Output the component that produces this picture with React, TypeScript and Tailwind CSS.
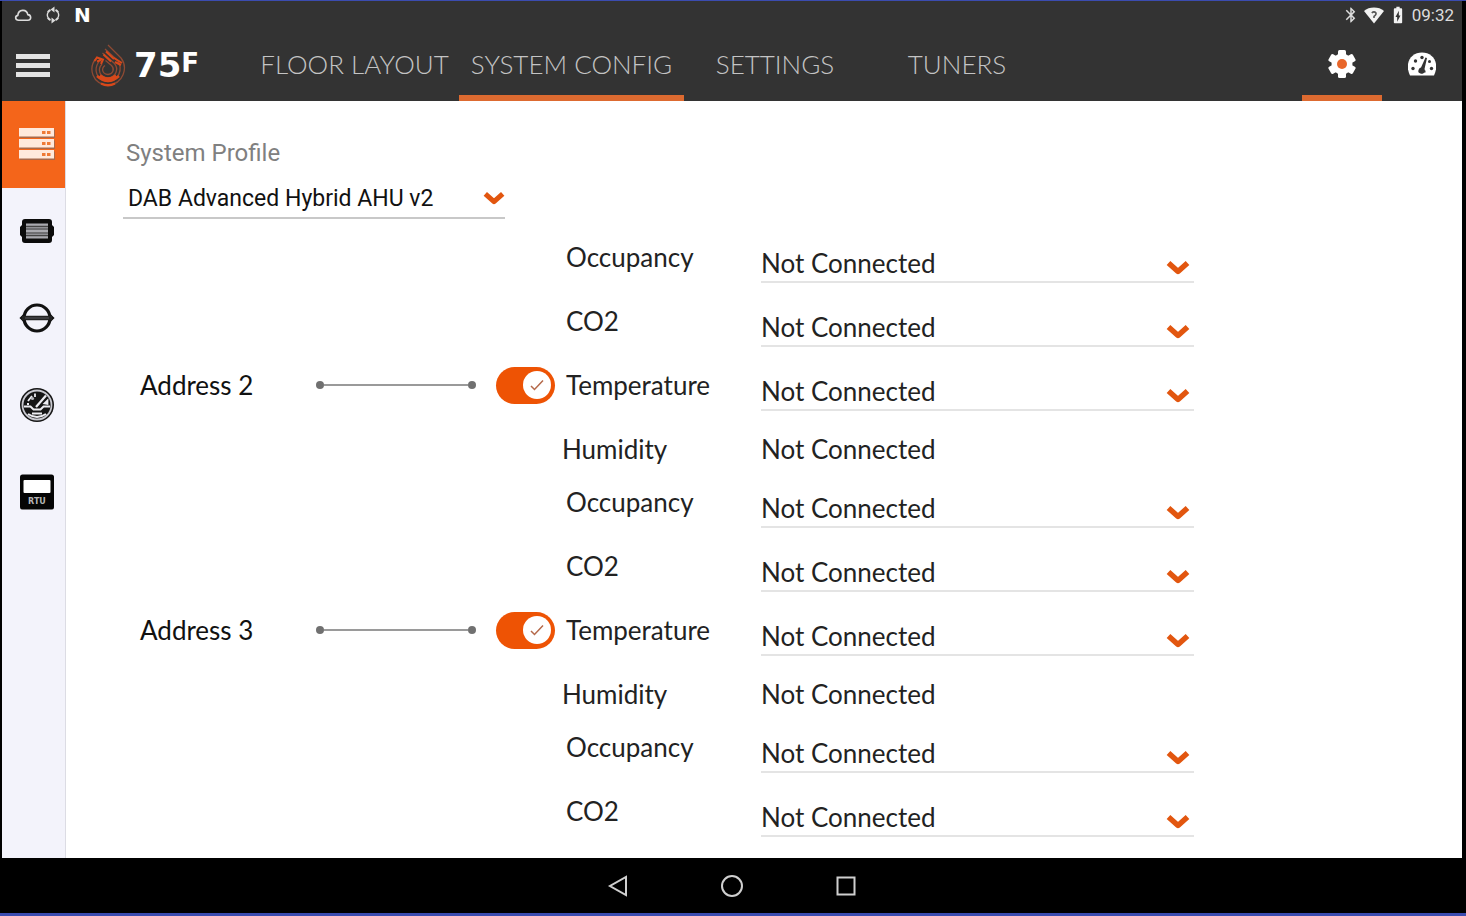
import type { ReactNode } from 'react';
import { MdBluetooth, MdBatteryChargingFull } from 'react-icons/md';

const Chevron = ({ className }: { className?: string }) => (
  <svg viewBox="0 0 24 16" className={className} fill="none" stroke="#e2560f" strokeWidth="5.5">
    <path d="M2.5 3 L12 11.5 L21.5 3" strokeLinejoin="round" />
  </svg>
);

const StatusBar = () => (
  <div className="flex h-7 items-center justify-between pl-3 pr-2 text-[#dcdcdc]">
    <div className="flex items-center gap-3">
      <svg viewBox="0 0 18 14" className="h-[14px] w-[18px]" fill="none" stroke="currentColor" strokeWidth="1.6">
        <path d="M4.5 12.2 C1.2 12.2 .6 8.2 3.8 7.4 C4.4 1 12.6 .6 13.8 6.6 C17.6 7 17.6 12.2 14 12.2 Z" />
      </svg>
      <svg viewBox="0 0 18 18" className="h-[18px] w-[18px]" fill="none" stroke="currentColor" strokeWidth="2">
        <path d="M6.5 3.8 A6 6 0 0 0 3.8 6.5 M11.5 3.8 A6 6 0 0 1 14.2 6.5 M6.5 14.2 A6 6 0 0 1 3.8 11.5 M11.5 14.2 A6 6 0 0 0 14.2 11.5" />
        <path d="M3.8 6.5 Q2.8 9 3.8 11.5 M14.2 6.5 Q15.2 9 14.2 11.5" strokeWidth="1.4" />
        <path d="M10.5 .5 L6.5 3.5 L10.5 6.5 Z M7.500 11.5 L11.5 14.5 L7.5 17.5 Z" fill="currentColor" stroke="none" />
      </svg>
      <span className="font-['DejaVu_Sans'] text-xl leading-none font-bold text-white">N</span>
    </div>
    <div className="flex items-center gap-1">
      <MdBluetooth className="h-[18px] w-[18px]" />
      <svg viewBox="0 0 20 17" className="h-[17px] w-5">
        <path d="M0 4 C5 -.6 15 -.6 20 4 L10 16.5 Z" fill="#f2f2f2" />
        <path d="M7.8 6 Q10 3.8 12 6 Q12.4 8 10 9.4 V11" fill="none" stroke="#555" strokeWidth="1.6" />
      </svg>
      <MdBatteryChargingFull className="h-5 w-5 text-[#f2f2f2]" />
      <span className="font-[Roboto] text-[17px] leading-none">09:32</span>
    </div>
  </div>
);

const Logo = () => (
  <a href="#home" className="ml-10 flex items-center gap-2" aria-label="75F home">
    <svg viewBox="0 0 36 44" className="h-11 w-9" fill="none" strokeLinecap="butt">
      <g stroke="#8f4a33" strokeWidth="1.3">
        <path d="M18 2 L31 15 C38 24 34 41 18 42 C2 41 -2 25 6 15.5" />
        <path d="M15 6 L28 18 C33 26 29 37.500 18 38.500 C6.500 37.500 3 27 9 18.500" />
        <path d="M12.500 10 L24.500 20.500 C29 26 26 34 18 35 C9.500 34 7 26.500 12 21" />
        <path d="M15.500 17.500 L21.500 22.500 C25 26 23 31 18 31.500 C12 31 11 25.500 15 22.500" />
      </g>
      <g stroke="#d8481a" strokeWidth="2">
        <path d="M16 8.500 L24 16 M13.500 11.500 L21 18.500 M24 15 L32 20 M25 19 L31 22" />
        <path d="M4.500 18 L7 14.500 L13 16.500 L11 21 M7 18.500 L11 17" />
        <path d="M7 33 Q18 43 29 33 M10 32.500 Q18 38.500 26 32.500 M11 40.500 Q18 44 25 40.500" strokeWidth="2.400" />
      </g>
    </svg>
    <span className="flex items-start font-['DejaVu_Sans'] text-[34px] leading-8 font-bold text-white">
      75<span className="text-[26px] leading-[28px]">F</span>
    </span>
  </a>
);

const tabs = [
  { label: 'FLOOR LAYOUT', width: 'w-[209px]' },
  { label: 'SYSTEM CONFIG', width: 'w-[225px]', active: true },
  { label: 'SETTINGS', width: 'w-[182px]' },
  { label: 'TUNERS', width: 'w-[182px]' },
];

const gearTeeth = [0, 60, 120, 180, 240, 300];

const Header = () => (
  <header className="bg-[#333333]">
    <StatusBar />
    <div className="flex h-[72px] items-stretch">
      <div className="flex w-[248px] items-center pl-[14px]">
        <button aria-label="Menu" className="flex w-[34px] flex-col gap-1">
          <span className="h-[5px] bg-[#e4e4e4]" />
          <span className="h-[5px] bg-[#e4e4e4]" />
          <span className="h-[5px] bg-[#e4e4e4]" />
        </button>
        <Logo />
      </div>
      <nav className="flex">
        {tabs.map((tab) => (
          <a
            key={tab.label}
            href={'#' + tab.label.toLowerCase().replace(' ', '-')}
            className={`flex items-center justify-center border-b-[6px] pt-1 font-[Lato] text-[26px] font-light whitespace-nowrap text-[#c4c4c4] ${tab.width} ${tab.active ? 'border-[#dd6a30]' : 'border-transparent'}`}
          >
            {tab.label}
          </a>
        ))}
      </nav>
      <div className="ml-auto flex">
        <button aria-label="Configuration" className="flex w-20 items-center justify-center border-b-[6px] border-[#dd6a30] pt-1">
          <svg viewBox="-14 -14 28 28" className="h-7 w-7" fill="#fff">
            {gearTeeth.map((angle) => (
              <rect key={angle} x="-4" y="-14" width="8" height="8" rx="1.5" transform={`rotate(${angle})`} />
            ))}
            <circle r="10.500" />
            <circle r="5" fill="#e8662a" />
          </svg>
        </button>
        <button aria-label="Dashboard" className="flex w-20 items-center justify-center border-b-[6px] border-transparent pt-1">
          <svg viewBox="0 0 28 24" className="h-6 w-7">
            <path d="M2 23.500 C-4 11 3 .5 14 .5 C25 .5 32 11 26 23.500 Z" fill="#fff" />
            <g fill="#333">
              <circle cx="5" cy="16.500" r="1.700" />
              <circle cx="7.500" cy="9" r="1.700" />
              <circle cx="14" cy="5.500" r="1.700" />
              <circle cx="23.500" cy="16.500" r="1.700" />
              <circle cx="21.500" cy="9.500" r="1.500" />
              <path d="M17.500 5.500 L19 6 L16.500 17 A3.200 3.200 0 1 1 13 15.500 Z" />
              <rect x="10.500" y="18.500" width="7" height="2" />
            </g>
          </svg>
        </button>
      </div>
    </div>
  </header>
);

const ServerIcon = () => (
  <svg viewBox="0 0 36 32" className="h-8 w-9">
    {[0, 11, 22].map((y) => (
      <g key={y}>
        <rect x="1" y={y + 1.5} width="35" height="8.500" fill="#a8694b" />
        <rect x="0" y={y} width="35" height="8.500" fill="#ffe9dc" />
        <path d={`M23 ${y + 4.5} h3.500 M28 ${y + 4.5} h3.500`} stroke="#ef7a35" strokeWidth="3" />
      </g>
    ))}
  </svg>
);

const VentIcon = () => (
  <svg viewBox="0 0 36 26" className="h-[26px] w-9">
    <path d="M6 1 H30 Q33 1 33 4 V7 L35 9 V17 L33 19 V22 Q33 25 30 25 H6 Q3 25 3 22 V19 L1 17 V9 L3 7 V4 Q3 1 6 1 Z" fill="#0b0b0b" />
    <rect x="7" y="5.500" width="22" height="15" fill="#a9a9af" />
    <path d="M7 8.500 H29 M7 17.500 H29" stroke="#444" strokeWidth="1.500" />
    <path d="M7 11 H29 M7 15 H29" stroke="#333" strokeWidth="1" />
  </svg>
);

const DamperIcon = () => (
  <svg viewBox="0 0 36 30" className="h-[30px] w-9" fill="none">
    <path d="M1.500 15 L5.500 11 V19 Z M34.500 15 L30.500 11 V19 Z" fill="#111" stroke="#111" strokeWidth="1.500" />
    <circle cx="18" cy="15" r="13" stroke="#111" strokeWidth="3.200" />
    <path d="M3 15 H33" stroke="#222" strokeWidth="4.500" />
    <path d="M6 15 H30" stroke="#55555a" strokeWidth="1" />
  </svg>
);

const GaugeIcon = () => (
  <svg viewBox="0 0 36 36" className="h-9 w-9" fill="none">
    <circle cx="18" cy="18" r="17" fill="#161616" />
    <circle cx="18" cy="18" r="14.500" stroke="#c9c9d0" strokeWidth="1.800" />
    <path d="M5 19.500 H11.500 L14.500 22.500 H21.500 L24.500 19.500 H31" stroke="#ededf2" strokeWidth="2" />
    <path d="M13 26.500 H23 M9 27 Q18 33 27 27" stroke="#ededf2" strokeWidth="2" />
    <path d="M17 20 L27 8.500" stroke="#ededf2" strokeWidth="2.200" />
    <path d="M9 14 L13 9 M8 17 H10 M16 6.500 V10 M25.500 16.500 L28.500 13.500 V17 Z" stroke="#ededf2" strokeWidth="1.800" />
    <circle cx="13.500" cy="11.500" r="1.600" fill="#b8b8be" />
  </svg>
);

const RtuIcon = () => (
  <svg viewBox="0 0 36 36" className="h-9 w-9">
    <rect x="1" y="0.500" width="34" height="35" rx="2.500" fill="#050505" />
    <rect x="4.500" y="6" width="27" height="13" rx="1" fill="#fff" />
    <text x="18" y="30" textAnchor="middle" fontFamily="DejaVu Sans" fontWeight="700" fontSize="8" fill="#b5b5b5">RTU</text>
  </svg>
);

const sideItems: { name: string; icon: ReactNode; active?: boolean }[] = [
  { name: 'System', icon: <ServerIcon />, active: true },
  { name: 'Vent', icon: <VentIcon /> },
  { name: 'Damper', icon: <DamperIcon /> },
  { name: 'Gauge', icon: <GaugeIcon /> },
  { name: 'RTU', icon: <RtuIcon /> },
];

const Sidebar = () => (
  <aside className="flex w-16 shrink-0 flex-col border-r border-[#dcdce4] bg-[#f3f3fb]">
    {sideItems.map((item) => (
      <button
        key={item.name}
        aria-label={item.name}
        className={`flex h-[87px] items-center justify-center pb-[2px] pl-[7px] ${item.active ? 'bg-[#f4651a]' : ''}`}
      >
        {item.icon}
      </button>
    ))}
  </aside>
);

interface Row {
  id: string;
  label: string;
  address?: string;
  fixed?: boolean;
}

const rows: Row[] = [
  { id: 'occupancy-1', label: 'Occupancy' },
  { id: 'co2-1', label: 'CO2' },
  { id: 'temperature-2', label: 'Temperature', address: 'Address 2' },
  { id: 'humidity-2', label: 'Humidity', fixed: true },
  { id: 'occupancy-2', label: 'Occupancy' },
  { id: 'co2-2', label: 'CO2' },
  { id: 'temperature-3', label: 'Temperature', address: 'Address 3' },
  { id: 'humidity-3', label: 'Humidity', fixed: true },
  { id: 'occupancy-3', label: 'Occupancy' },
  { id: 'co2-3', label: 'CO2' },
];

const AddressToggle = ({ address }: { address: string }) => (
  <label className="flex h-[30px] items-center text-[#111]">
    <span className="w-[176px]">{address}</span>
    <span className="flex w-[160px] items-center">
      <span className="h-2 w-2 rounded-full bg-[#707070]" />
      <span className="h-[2px] flex-1 bg-[#9a9a9a]" />
      <span className="h-2 w-2 rounded-full bg-[#707070]" />
    </span>
    <input type="checkbox" role="switch" defaultChecked className="peer sr-only" />
    <span className="ml-5 flex h-[37px] w-[59px] items-center justify-start rounded-full bg-gray-400 px-1 peer-checked:justify-end peer-checked:bg-[#ee5304]">
      <span className="flex h-7 w-7 items-center justify-center rounded-full bg-white">
        <svg viewBox="0 0 16 14" className="h-[14px] w-4" fill="none" stroke="#b5694a" strokeWidth="1.500">
          <path d="M2 8 L5.500 11.500 L14 2.500" />
        </svg>
      </span>
    </span>
  </label>
);

const ConfigRow = ({ row }: { row: Row }) => (
  <div className={`flex items-start font-[Lato] text-[26px] leading-[30px] text-[#222] ${row.fixed ? 'h-[53px]' : 'h-16'}`}>
    <div className="w-[426px] shrink-0 pt-[23px]">{row.address && <AddressToggle address={row.address} />}</div>
    {row.fixed ? (
      <>
        <span className="-ml-1 w-[199px] shrink-0 pt-[23px]">{row.label}</span>
        <span className="pt-[23px]">Not Connected</span>
      </>
    ) : (
      <>
        <label htmlFor={row.id} className="w-[195px] shrink-0 pt-[23px]">{row.label}</label>
        <div className="relative flex-1 self-stretch border-b-2 border-[#e4e4e4] pt-7">
          <select id={row.id} className="block h-8 w-full appearance-none bg-transparent outline-none">
            <option>Not Connected</option>
          </select>
          <Chevron className="pointer-events-none absolute right-1 bottom-[5px] h-4 w-6" />
        </div>
      </>
    )}
  </div>
);

const NavBar = () => (
  <footer className="flex h-[55px] items-center justify-center gap-[92px] bg-black text-[#cfcfcf]">
    <button aria-label="Back">
      <svg viewBox="0 0 22 22" className="h-[22px] w-[22px]" fill="none" stroke="currentColor" strokeWidth="2">
        <path d="M19 2 V20 L3 11 Z" />
      </svg>
    </button>
    <button aria-label="Home">
      <svg viewBox="0 0 22 22" className="h-[22px] w-[22px]" fill="none" stroke="currentColor" strokeWidth="2">
        <circle cx="11" cy="11" r="10" />
      </svg>
    </button>
    <button aria-label="Recent apps">
      <svg viewBox="0 0 22 22" className="h-[22px] w-[22px]" fill="none" stroke="currentColor" strokeWidth="2">
        <rect x="2.500" y="2.500" width="17" height="17" />
      </svg>
    </button>
  </footer>
);

export default function App() {
  return (
    <div className="flex min-h-screen flex-col border-t border-b-[3px] border-[#3b4cb0] bg-black">
      <div className="flex flex-1 flex-col pr-1 pl-[2px]">
        <Header />
        <div className="flex flex-1 bg-white">
          <Sidebar />
          <main className="flex-1 pr-[268px] pl-[57px]">
            <div className="w-[382px] pt-9 font-[Roboto]">
              <label htmlFor="profile" className="block pl-[3px] text-2xl leading-8 text-[#808080]">System Profile</label>
              <div className="relative border-b-2 border-[#c8c8c8] pt-3">
                <select id="profile" className="block h-9 w-full appearance-none bg-transparent pl-[5px] text-[23px] text-[#111] outline-none">
                  <option>DAB Advanced Hybrid AHU v2</option>
                </select>
                <Chevron className="pointer-events-none absolute right-0 bottom-[11px] h-[15px] w-[22px]" />
              </div>
            </div>
            <div className="pl-[17px]">
              {rows.map((row) => (
                <ConfigRow key={row.id} row={row} />
              ))}
            </div>
          </main>
        </div>
        <NavBar />
      </div>
    </div>
  );
}
